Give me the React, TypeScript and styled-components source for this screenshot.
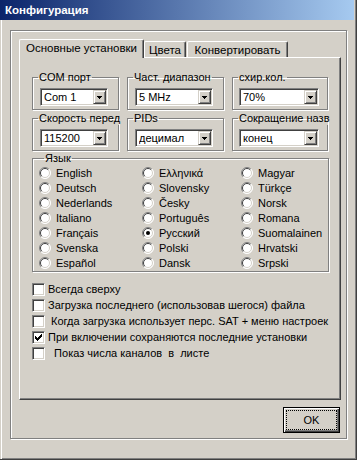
import styled, { createGlobalStyle } from "styled-components";

const GlobalStyle = createGlobalStyle`
  body {
    margin: 0;
    background: #d4d0c8;
    font-family: "Liberation Sans", Arial, sans-serif;
    font-size: 11px;
    color: #000;
  }
`;

const Window = styled.div`
  width: 357px;
  height: 460px;
  box-sizing: border-box;
  background: #d4d0c8;
  border-right: 1px solid #404040;
  border-bottom: 1px solid #404040;
  box-shadow: inset 1px 0 #d4d0c8, inset 2px 0 #fff, inset -1px -1px #808080;
`;

const TitleBar = styled.div`
  height: 20px;
  margin-right: 2px;
  padding-left: 5px;
  display: flex;
  align-items: center;
  background: linear-gradient(to right, #0a246a, #a6caf0);
  color: #fff;
  font-weight: bold;
  font-size: 11.5px;
`;

const Panel = styled.div`
  margin: 10px 0 0 10px;
  width: 337px;
  height: 409px;
  box-sizing: border-box;
  border: 1px solid #808080;
  box-shadow: inset 1px 1px #fff, 1px 1px #fff;
  padding: 8px 5px 5px 8px;
  display: flex;
  flex-direction: column;
`;

const TabStrip = styled.div`
  height: 18px;
  display: flex;
  align-items: flex-end;
  position: relative;
  z-index: 1;
  font-size: 11.5px;
`;

const Tab = styled.div<{ $active?: boolean; $w: number; $gap?: number }>`
  width: ${(p) => p.$w}px;
  height: ${(p) => (p.$active ? 19 : 16)}px;
  margin-bottom: ${(p) => (p.$active ? -1 : 0)}px;
  margin-left: ${(p) => p.$gap ?? 0}px;
  box-sizing: border-box;
  padding-top: 2px;
  border-top: 1px solid #fff;
  border-left: 1px solid #fff;
  border-right: 1px solid #404040;
  border-radius: 2px 2px 0 0;
  box-shadow: inset -1px 0 #808080;
  background: #d4d0c8;
  display: flex;
  justify-content: center;
  line-height: 13px;
  white-space: nowrap;
`;

const Pane = styled.div`
  width: 322px;
  height: 343px;
  box-sizing: border-box;
  border-top: 1px solid #fff;
  border-left: 1px solid #fff;
  border-right: 1px solid #404040;
  border-bottom: 1px solid #404040;
  box-shadow: inset -1px -1px #808080;
  padding: 13px 11px 0 12px;
  display: flex;
  flex-direction: column;
`;

const TopGrid = styled.div`
  display: grid;
  grid-template-columns: 87px 97px 96px;
  column-gap: 8px;
  row-gap: 2px;
`;

const Group = styled.fieldset`
  margin: 0;
  min-width: 0;
  border: 1px solid #808080;
  box-shadow: inset 1px 1px #fff, 1px 1px #fff;
  padding: 4px 0 3px 0;
`;

const Legend = styled.legend`
  margin-left: 5px;
  padding: 0 1px;
  line-height: 13px;
  white-space: nowrap;
`;

const Combo = styled.div<{ $ml: number; $mr: number }>`
  height: 18px;
  margin: 0 ${(p) => p.$mr}px 0 ${(p) => p.$ml}px;
  box-sizing: border-box;
  border: 1px solid;
  border-color: #808080 #fff #fff #808080;
  box-shadow: inset 1px 1px #404040, inset -1px -1px #d4d0c8;
  background: #fff;
  display: flex;
  align-items: center;
  padding: 0 1px 0 3px;
`;

const ComboValue = styled.span`
  flex: 1;
  line-height: 13px;
  white-space: nowrap;
  overflow: hidden;
`;

const DropButton = styled.div`
  width: 13px;
  height: 14px;
  box-sizing: border-box;
  border: 1px solid;
  border-color: #d4d0c8 #404040 #404040 #d4d0c8;
  box-shadow: inset 1px 1px #fff, inset -1px -1px #808080;
  background: #d4d0c8;
  display: flex;
  align-items: center;
  justify-content: center;
`;

const LangGroup = styled(Group)`
  margin-top: 1px;
  padding: 0 0 1px 6px;
`;

const RadioGrid = styled.div`
  display: grid;
  grid-template-columns: 103px 99px 1fr;
  grid-template-rows: repeat(7, 15px);
  grid-auto-flow: column;
`;

const RadioItem = styled.label`
  display: flex;
  align-items: center;
  gap: 5px;
  white-space: nowrap;
`;

const CheckList = styled.div`
  margin-top: 9px;
  display: flex;
  flex-direction: column;
`;

const CheckRow = styled.label`
  height: 16px;
  display: flex;
  align-items: center;
  gap: 3px;
  white-space: pre;
  overflow: hidden;
`;

const CheckBox = styled.span`
  flex: none;
  width: 13px;
  height: 13px;
  box-sizing: border-box;
  border: 1px solid;
  border-color: #808080 #fff #fff #808080;
  box-shadow: inset 1px 1px #404040, inset -1px -1px #d4d0c8;
  background: #fff;
  display: flex;
  align-items: center;
  justify-content: center;
`;

const ButtonRow = styled.div`
  margin-top: 7px;
  padding-right: 1px;
  display: flex;
  justify-content: flex-end;
`;

const OkButton = styled.div`
  width: 57px;
  height: 26px;
  box-sizing: border-box;
  border: 1px solid #000;
  box-shadow: inset 1px 1px #fff, inset -1px -1px #404040, inset -2px -2px #808080;
  background: #d4d0c8;
  padding: 2px;
  display: flex;
`;

const FocusRing = styled.span`
  flex: 1;
  border: 1px dotted #000;
  display: flex;
  align-items: center;
  justify-content: center;
`;

function Arrow() {
  return (
    <svg width="5" height="3" shapeRendering="crispEdges">
      <rect x="0" y="0" width="5" height="1" fill="#000" />
      <rect x="1" y="1" width="3" height="1" fill="#000" />
      <rect x="2" y="2" width="1" height="1" fill="#000" />
    </svg>
  );
}

function RadioIcon({ on }: { on?: boolean }) {
  return (
    <svg width="12" height="12" viewBox="0 0 12 12">
      <circle cx="6" cy="6" r="5.5" fill="#fff" />
      <path d="M9.9 2.1 A5.5 5.5 0 0 0 2.1 9.9" fill="none" stroke="#808080" />
      <path d="M9.9 2.1 A5.5 5.5 0 0 1 2.1 9.9" fill="none" stroke="#fff" />
      <path d="M9.2 2.8 A4.5 4.5 0 0 0 2.8 9.2" fill="none" stroke="#404040" />
      <path d="M9.2 2.8 A4.5 4.5 0 0 1 2.8 9.2" fill="none" stroke="#d4d0c8" />
      {on && <circle cx="6" cy="6" r="2" fill="#000" />}
    </svg>
  );
}

const tick = ["......X", ".....XX", "X...XXX", "XX.XXX.", "XXXXX..", ".XXX...", "..X...."];

function Tick() {
  return (
    <svg width="7" height="7" shapeRendering="crispEdges">
      {tick.flatMap((row, y) =>
        row.split("").map((c, x) => (c === "X" ? <rect key={`${x}-${y}`} x={x} y={y} width="1" height="1" fill="#000" /> : null))
      )}
    </svg>
  );
}

const combos = [
  { label: "COM порт", value: "Com 1", ml: 7, mr: 10 },
  { label: "Част. диапазон", value: "5 MHz", ml: 7, mr: 10 },
  { label: "схир.кол. ", value: "70%", ml: 6, mr: 8 },
  { label: "Скорость перед", value: "115200", ml: 7, mr: 10 },
  { label: "PIDs", value: "децимал", ml: 7, mr: 10 },
  { label: "Сокращение назв", value: "конец", ml: 6, mr: 8 },
];

const languages = [
  "English", "Deutsch", "Nederlands", "Italiano", "Français", "Svenska", "Español",
  "Ελληνικά", "Slovensky", "Česky", "Português", "Русский", "Polski", "Dansk",
  "Magyar", "Türkçe", "Norsk", "Romana", "Suomalainen", "Hrvatski", "Srpski",
];

const options = [
  { text: "Всегда сверху" },
  { text: "Загрузка последнего (использовав шегося) файла" },
  { text: " Когда загрузка использует перс. SAT + меню настроек" },
  { text: "При включении сохраняются последние установки", on: true },
  { text: "  Показ числа каналов  в  листе" },
];

export default function App() {
  return (
    <>
      <GlobalStyle />
      <Window>
        <TitleBar>Конфигурация</TitleBar>
        <Panel>
          <TabStrip>
            <Tab $active $w={125}>Основные установки</Tab>
            <Tab $w={42}>Цвета</Tab>
            <Tab $w={101} $gap={1}>Конвертировать</Tab>
          </TabStrip>
          <Pane>
            <TopGrid>
              {combos.map((c) => (
                <Group key={c.label}>
                  <Legend>{c.label}</Legend>
                  <Combo $ml={c.ml} $mr={c.mr}>
                    <ComboValue>{c.value}</ComboValue>
                    <DropButton>
                      <Arrow />
                    </DropButton>
                  </Combo>
                </Group>
              ))}
            </TopGrid>
            <LangGroup>
              <Legend>Язык</Legend>
              <RadioGrid>
                {languages.map((l) => (
                  <RadioItem key={l}>
                    <RadioIcon on={l === "Русский"} />
                    {l}
                  </RadioItem>
                ))}
              </RadioGrid>
            </LangGroup>
            <CheckList>
              {options.map((o) => (
                <CheckRow key={o.text}>
                  <CheckBox>{o.on && <Tick />}</CheckBox>
                  {o.text}
                </CheckRow>
              ))}
            </CheckList>
          </Pane>
          <ButtonRow>
            <OkButton>
              <FocusRing>OK</FocusRing>
            </OkButton>
          </ButtonRow>
        </Panel>
      </Window>
    </>
  );
}
